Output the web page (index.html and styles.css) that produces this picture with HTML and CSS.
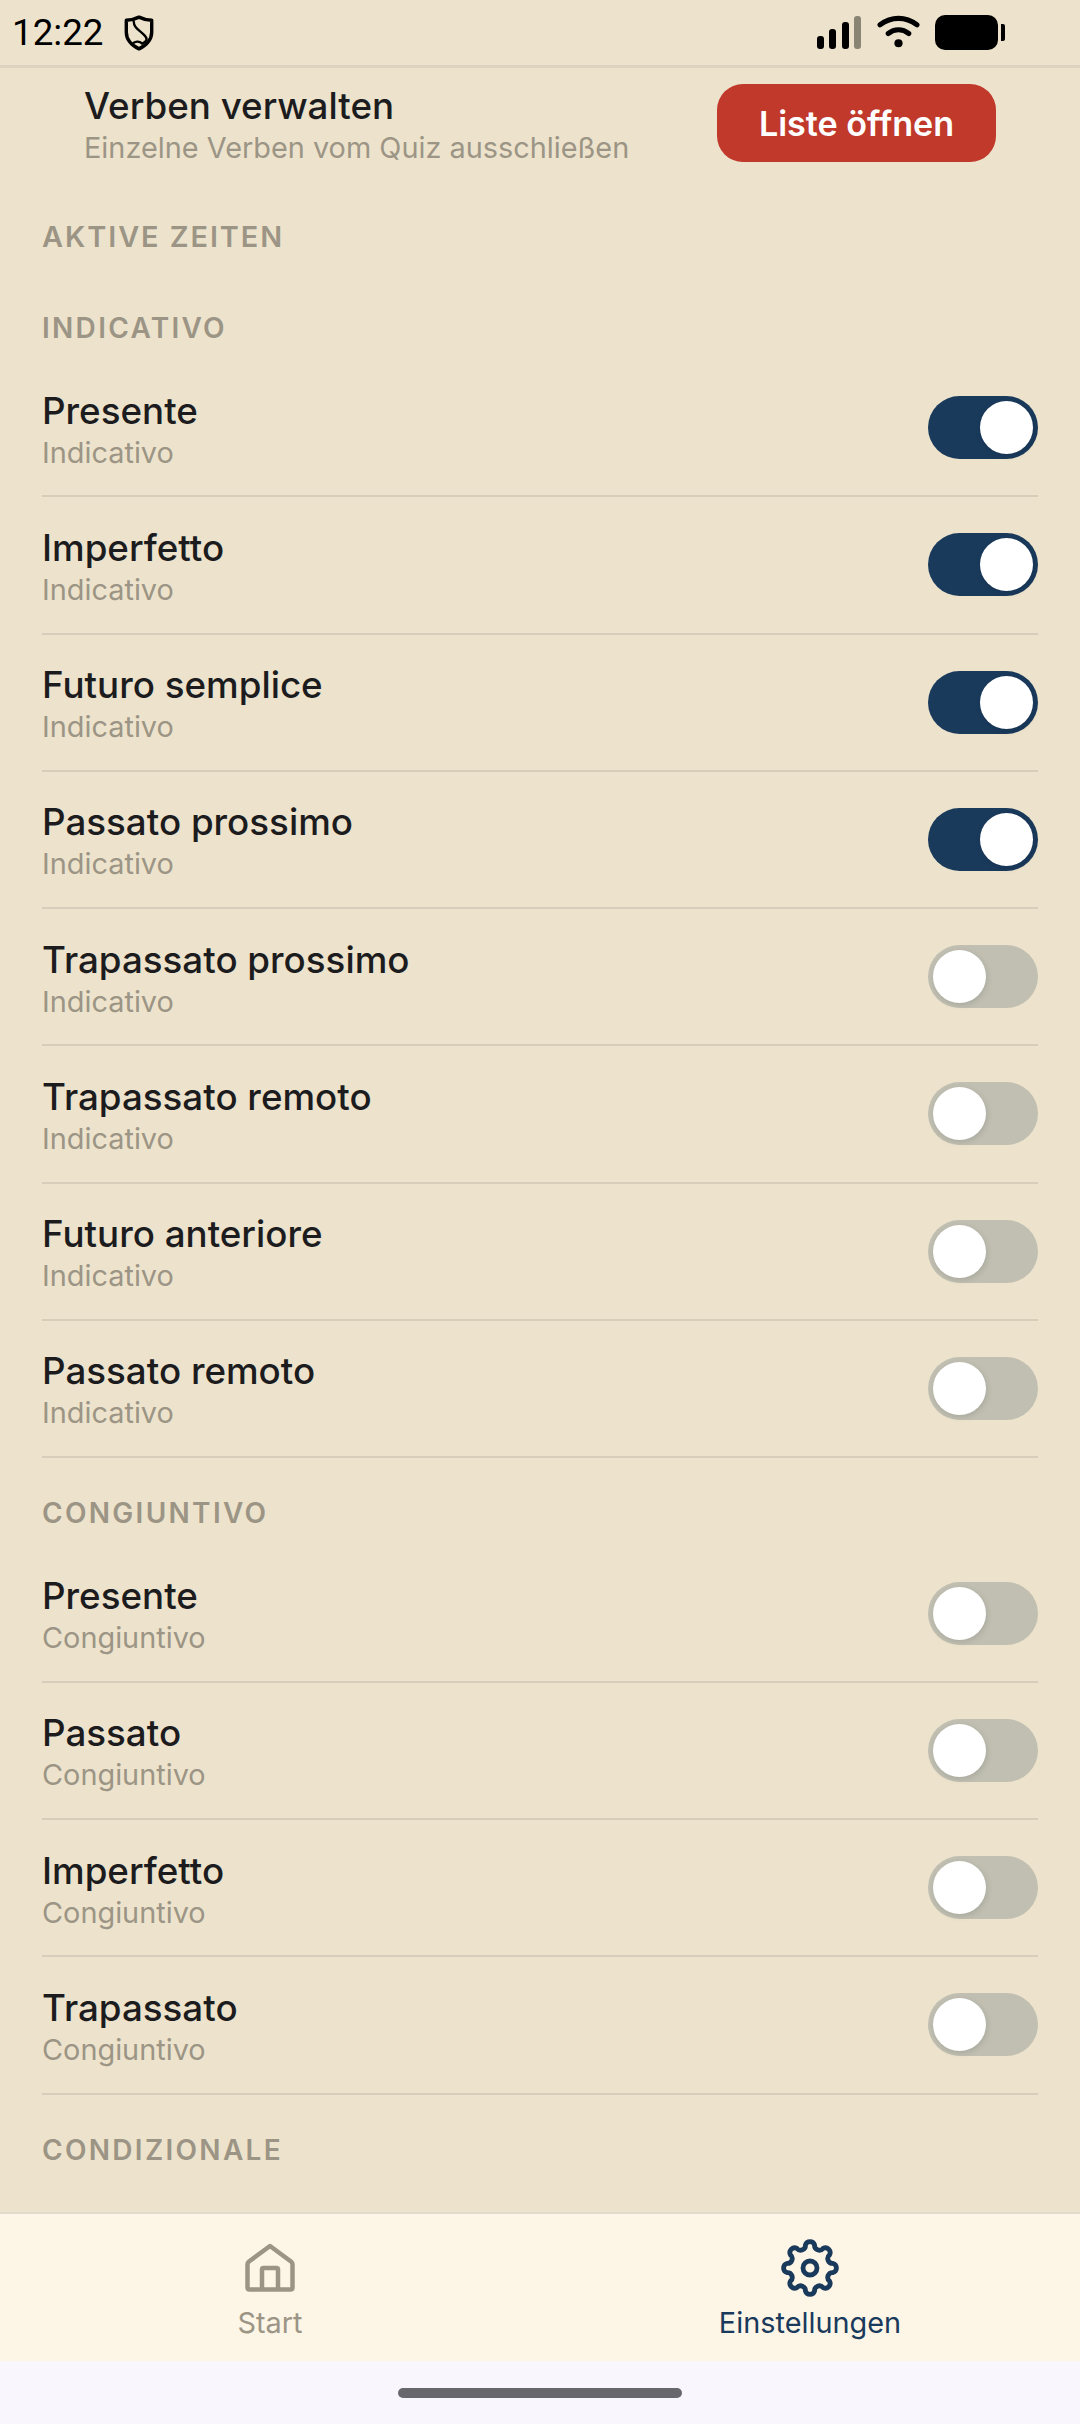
FILE: index.html
```html
<!DOCTYPE html>
<html lang="de">
<head>
    <meta charset="UTF-8">
    <meta name="viewport" content="width=device-width, initial-scale=1.0">
    <title>Einstellungen</title>
    <link rel="stylesheet" href="styles.css">
</head>
<body>
    <div class="app">
        <div class="status-bar">
            <div class="status-left">
                <span class="clock">12:22</span>
                <svg class="shield" viewBox="0 0 28 34" width="30" height="36">
                    <path d="M14 2 C18 4 22 5 26 5 L26 16 C26 24 20 29 14 32 C8 29 2 24 2 16 L2 5 C6 5 10 4 14 2 Z" fill="none" stroke="#000" stroke-width="3.2" stroke-linejoin="round"/>
                    <path d="M9 6 C9 12 14 14 19 19 C23 23 21 25 17 27 C14 24 10 25 8 27" fill="none" stroke="#000" stroke-width="2.2" stroke-linecap="round"/>
                </svg>
            </div>
            <div class="status-right">
                <div class="signal">
                    <span class="bar bar-1"></span>
                    <span class="bar bar-2"></span>
                    <span class="bar bar-3"></span>
                    <span class="bar bar-4"></span>
                </div>
                <svg class="wifi" viewBox="0 0 42 32" width="43" height="33">
                    <path d="M3 9.5 C14 1 28 1 39 9.5" fill="none" stroke="#000" stroke-width="5" stroke-linecap="round"/>
                    <path d="M11 18 C17 13 25 13 31 18" fill="none" stroke="#000" stroke-width="5" stroke-linecap="round"/>
                    <circle cx="21" cy="27.5" r="4"/>
                </svg>
                <div class="battery"><span class="battery-tip"></span></div>
            </div>
        </div>

        <div class="content">
            <div class="manage">
                <div class="manage-text">
                    <div class="manage-title">Verben verwalten</div>
                    <div class="manage-sub">Einzelne Verben vom Quiz ausschließen</div>
                </div>
                <button class="btn-open">Liste öffnen</button>
            </div>

            <div class="section-title">AKTIVE ZEITEN</div>

            <div class="group-title group-first">INDICATIVO</div>
            <div class="row"><div class="row-text"><div class="row-title">Presente</div><div class="row-sub">Indicativo</div></div><span class="toggle on"></span></div>
            <div class="row"><div class="row-text"><div class="row-title">Imperfetto</div><div class="row-sub">Indicativo</div></div><span class="toggle on"></span></div>
            <div class="row"><div class="row-text"><div class="row-title">Futuro semplice</div><div class="row-sub">Indicativo</div></div><span class="toggle on"></span></div>
            <div class="row"><div class="row-text"><div class="row-title">Passato prossimo</div><div class="row-sub">Indicativo</div></div><span class="toggle on"></span></div>
            <div class="row"><div class="row-text"><div class="row-title">Trapassato prossimo</div><div class="row-sub">Indicativo</div></div><span class="toggle"></span></div>
            <div class="row"><div class="row-text"><div class="row-title">Trapassato remoto</div><div class="row-sub">Indicativo</div></div><span class="toggle"></span></div>
            <div class="row"><div class="row-text"><div class="row-title">Futuro anteriore</div><div class="row-sub">Indicativo</div></div><span class="toggle"></span></div>
            <div class="row"><div class="row-text"><div class="row-title">Passato remoto</div><div class="row-sub">Indicativo</div></div><span class="toggle"></span></div>

            <div class="group-title">CONGIUNTIVO</div>
            <div class="row"><div class="row-text"><div class="row-title">Presente</div><div class="row-sub">Congiuntivo</div></div><span class="toggle"></span></div>
            <div class="row"><div class="row-text"><div class="row-title">Passato</div><div class="row-sub">Congiuntivo</div></div><span class="toggle"></span></div>
            <div class="row"><div class="row-text"><div class="row-title">Imperfetto</div><div class="row-sub">Congiuntivo</div></div><span class="toggle"></span></div>
            <div class="row"><div class="row-text"><div class="row-title">Trapassato</div><div class="row-sub">Congiuntivo</div></div><span class="toggle"></span></div>

            <div class="group-title">CONDIZIONALE</div>
        </div>

        <div class="bottom-nav">
            <div class="nav-item">
                <svg class="nav-icon" viewBox="0 0 58 58" width="58" height="58">
                    <path d="M29 7 L50 22.5 Q51.5 23.7 51.5 25.5 L51.5 48.5 Q51.5 50.5 49.5 50.5 L8.500 50.5 Q6.500 50.5 6.500 48.5 L6.500 25.500 Q6.500 23.700 8 22.500 Z" fill="none" stroke="#9C9586" stroke-width="4.500" stroke-linejoin="round"/>
                    <path d="M21 50.500 L21 30.500 Q21 29 22.500 29 L35.500 29 Q37 29 37 30.500 L37 50.500" fill="none" stroke="#9C9586" stroke-width="4.500"/>
                </svg>
                <span class="nav-label">Start</span>
            </div>
            <div class="nav-item active">
                <svg class="nav-icon" viewBox="-29 -29 58 58" width="58" height="58">
                    <path d="M-4.58-23.05 A4.8 4.800 0 0 1 4.58-23.05 A4.800 4.800 0 0 0 13.06-19.54 A4.800 4.800 0 0 1 19.54-13.06 A4.800 4.800 0 0 0 23.05-4.58 A4.800 4.800 0 0 1 23.05 4.58 A4.800 4.800 0 0 0 19.54 13.06 A4.800 4.800 0 0 1 13.06 19.54 A4.800 4.800 0 0 0 4.58 23.05 A4.800 4.800 0 0 1 -4.58 23.05 A4.800 4.800 0 0 0 -13.06 19.54 A4.800 4.800 0 0 1 -19.54 13.06 A4.800 4.800 0 0 0 -23.05 4.58 A4.800 4.800 0 0 1 -23.05 -4.58 A4.800 4.800 0 0 0 -19.54 -13.06 A4.800 4.800 0 0 1 -13.06 -19.54 A4.800 4.800 0 0 0 -4.58 -23.05 Z" fill="none" stroke="#1A3A5C" stroke-width="4.800"/>
                    <circle cx="0" cy="0" r="7" fill="none" stroke="#1A3A5C" stroke-width="4.800"/>
                </svg>
                <span class="nav-label">Einstellungen</span>
            </div>
        </div>

        <div class="gesture-area"><span class="gesture-pill"></span></div>
    </div>
</body>
</html>
```

FILE: styles.css
```css
* {
    box-sizing: border-box;
}

html, body {
    margin: 0;
    padding: 0;
}

body {
    font-family: "Inter", "Noto Sans", sans-serif;
    background: #EDE3CC;
    color: #1C1C1E;
}

.app {
    width: 1080px;
    height: 2424px;
    display: flex;
    flex-direction: column;
    overflow: hidden;
}

/* status bar */
.status-bar {
    flex: none;
    height: 68px;
    border-bottom: 3px solid #DCD3C0;
    display: flex;
    justify-content: space-between;
    align-items: center;
    padding: 0 82px 0 12px;
}

.status-left {
    display: flex;
    align-items: center;
    gap: 20px;
}

.clock {
    font-family: "Roboto", sans-serif;
    font-size: 36.750px;
    color: #000;
}

.status-right {
    display: flex;
    align-items: center;
}

.signal {
    display: flex;
    align-items: flex-end;
    gap: 5.500px;
    height: 33px;
}

.bar {
    width: 7px;
    background: #000;
    border-radius: 3px;
}

.bar-1 { height: 13px; }
.bar-2 { height: 20px; }
.bar-3 { height: 27px; }
.bar-4 { height: 33px; background: #8A8474; }

.wifi {
    margin-left: 16px;
    margin-top: -2px;
}

.battery {
    position: relative;
    width: 63px;
    height: 35px;
    margin-left: 15px;
    background: #000;
    border-radius: 10px;
}

.battery-tip {
    position: absolute;
    left: 66px;
    top: 9px;
    width: 4px;
    height: 17px;
    background: #000;
    border-radius: 0 2px 2px 0;
}

/* content */
.content {
    flex: 1;
    min-height: 0;
    overflow: hidden;
    padding: 0 42px;
}

.manage {
    display: flex;
    justify-content: space-between;
    align-items: center;
    padding: 16px 42px 0 42px;
}

.manage-text {
    padding-top: 1px;
}

.manage-title {
    font-size: 36.750px;
    font-weight: 450;
    line-height: 42px;
}

.manage-sub {
    font-size: 28.875px;
    line-height: 42px;
    color: #9C9586;
}

.btn-open {
    width: 279px;
    height: 78px;
    margin-bottom: 7px;
    border: none;
    border-radius: 26px;
    background: #C0392B;
    color: #fff;
    font-family: "Inter", sans-serif;
    font-size: 34.125px;
    font-weight: 600;
}

.section-title {
    margin-top: 51px;
    font-size: 28.875px;
    font-weight: 600;
    line-height: 34px;
    letter-spacing: 1.950px;
    color: #9C9586;
}

.group-title {
    margin-top: 38px;
    margin-bottom: 15.500px;
    font-size: 28px;
    font-weight: 600;
    line-height: 34px;
    letter-spacing: 2.300px;
    color: #9C9586;
}

.group-first {
    margin-top: 57px;
    margin-bottom: 15px;
}

.row {
    height: 137.250px;
    display: flex;
    justify-content: space-between;
    align-items: center;
    border-bottom: 2px solid #D6CDBA;
}

.row-text {
    padding-top: 6px;
}

.row-title {
    font-size: 36.750px;
    font-weight: 450;
    line-height: 44px;
    color: #1C1C1E;
}

.row-sub {
    font-size: 28.875px;
    line-height: 40px;
    color: #9C9586;
}

/* switches */
.toggle {
    position: relative;
    flex: none;
    width: 110px;
    height: 63px;
    border-radius: 32px;
    background: #C0BFB2;
}

.toggle::after {
    content: "";
    position: absolute;
    left: 5px;
    top: 5px;
    width: 53px;
    height: 53px;
    border-radius: 50%;
    background: #fff;
    box-shadow: 1px 2px 6px rgba(0,0,0,0.12);
}

.toggle.on {
    background: #1A3A5C;
}

.toggle.on::after {
    left: 52px;
}

/* bottom nav */
.bottom-nav {
    flex: none;
    height: 149px;
    display: flex;
    background: #FDF5E6;
    border-top: 2px solid #E0DBCD;
}

.nav-item {
    flex: 1;
    display: flex;
    flex-direction: column;
    align-items: center;
    padding-top: 25px;
    color: #9C9586;
}

.nav-item.active {
    color: #1A3A5C;
}

.nav-label {
    font-size: 28.875px;
    line-height: 36px;
    margin-top: 8px;
}

.gesture-area {
    flex: none;
    height: 63px;
    display: flex;
    justify-content: center;
    padding-top: 27px;
    background: #F9F7FD;
}

.gesture-pill {
    width: 284px;
    height: 10px;
    border-radius: 5px;
    background: #68676C;
}
```
